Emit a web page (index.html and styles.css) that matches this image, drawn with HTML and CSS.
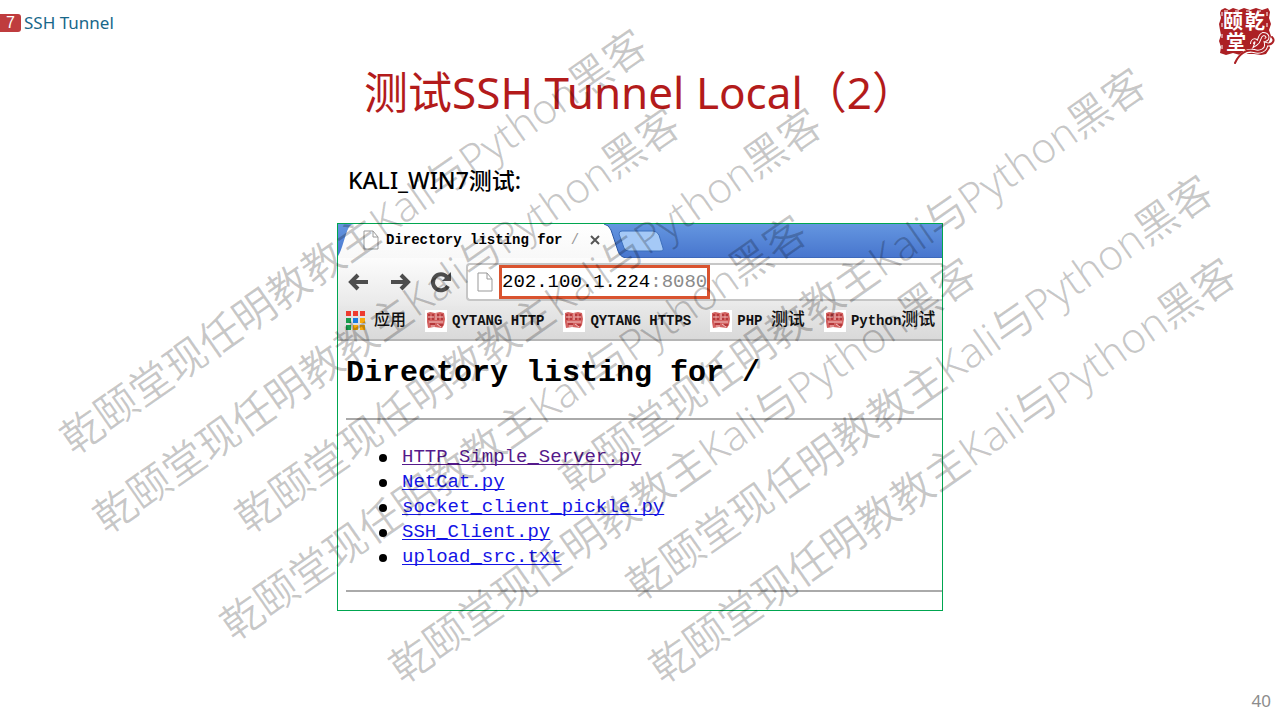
FILE: index.html
```html
<!DOCTYPE html>
<html lang="zh-CN">
<head>
<meta charset="utf-8">
<title>SSH Tunnel</title>
<link rel="stylesheet" href="styles.css">
</head>
<body>
<div class="slide">
  <header class="top">
    <div class="section"><span class="section-no">7</span><span class="section-name">SSH Tunnel</span></div>
    <svg class="logo" viewBox="0 0 62 60" role="img" aria-label="颐乾堂">
      <path class="seal" d="M5 6 9 4 13 6 17 4 23 6 28 4 34 6 40 4 46 6 52 4 54 8 53 14 55 20 53 26 55 32 53 38 54 44 50 50 45 51 38 50 30 50 24 51 17 49 10 51 4 49 5 43 3 37 5 31 4 26 3 20 5 14 4 9Z"/>
      <path class="seal-gap" d="M8 7H51V30M6 8V47"/>
      <text class="seal-text" x="7" y="25">颐</text>
      <text class="seal-text" x="29" y="25">乾</text>
      <text class="seal-text" x="10" y="46">堂</text>
      <path class="cloud-back" d="M22 56C25 50 31 46 38 47C44 49 51 46 50 40C55 42 60 37 56 33M36 40C36 35 42 35 40 40C45 37 42 32 47 30C52 30 53 35 49 36"/>
      <path class="cloud" d="M19 59C23 50 30 45 38 47C44 49 51 46 50 40C55 42 60 37 56 33M36 40C36 35 42 35 40 40C45 37 42 32 47 30C52 30 53 35 49 36"/>
    </svg>
  </header>
  <main class="content">
    <h1 class="title">测试SSH Tunnel Local（2）</h1>
    <section class="example">
      <h2 class="label">KALI_WIN7测试:</h2>
      <div class="browser">
        <div class="tabs">
          <svg class="tab-shape" viewBox="0 0 330 34" aria-hidden="true">
            <defs><linearGradient id="tab" x1="0" y1="0" x2="0" y2="1"><stop offset="0" stop-color="#fff"/><stop offset="1" stop-color="#f8f8f8"/></linearGradient></defs>
            <path d="M0 34V32C4 27 7 10 11 3Q13 0 16 0H266Q271 1 273 6L280 27Q282 33 288 34Z" fill="url(#tab)"/>
            <path d="M266 0Q271 1 273 6L280 27Q282 33 288 34" fill="none" stroke="#2c58a5"/>
            <path d="M281 10Q281 7 284 7H315Q319 7 321 11L325 24Q326 27 322 27H291Q287 27 286 24Z" fill="#a5c9f6" stroke="#3d70bd"/>
          </svg>
          <div class="tab">
            <svg class="page-icon" viewBox="0 0 18 22" aria-hidden="true"><path d="M2 2H11L16 8V20H2Z M11 2V8H16"/></svg>
            <span class="tab-title">Directory listing for <i class="fade">/</i></span>
            <button class="close" aria-label="关闭"><svg viewBox="0 0 12 12"><path d="M2 2 10 10M10 2 2 10"/></svg></button>
          </div>
        </div>
        <div class="toolbar">
          <button class="nav" aria-label="后退"><svg viewBox="0 0 24 22"><path d="M21 11H4M11 4 4 11 11 18"/></svg></button>
          <button class="nav" aria-label="前进"><svg viewBox="0 0 24 22"><path d="M3 11H20M13 4 20 11 13 18"/></svg></button>
          <button class="nav" aria-label="刷新"><svg viewBox="0 0 24 22"><path d="M19 15A8 8 0 1 1 18 6"/><path class="head" d="M22 1V10H13Z"/></svg></button>
          <div class="address">
            <svg class="page-icon" viewBox="0 0 18 22" aria-hidden="true"><path d="M2 2H11L16 8V20H2Z M11 2V8H16"/></svg>
            <div class="url">202.100.1.224<span class="port">:8080</span></div>
          </div>
        </div>
        <nav class="bookmarks">
          <a class="mark apps" href="#"><svg class="grid" viewBox="0 0 19 19" aria-hidden="true"><path fill="#ed3b2f" d="M0 0h5v5H0zM7 0h5v5H7zM14 0h5v5h-5z"/><path fill="#189c4c" d="M0 7h5v5H0zM0 14h5v5H0z"/><path fill="#1a7be0" d="M7 7h5v5H7z"/><path fill="#f7a90c" d="M14 7h5v5h-5zM7 14h5v5H7zM14 14h5v5h-5z"/></svg>应用</a>
          <a class="mark" href="#"><svg class="fav" viewBox="0 0 22 22" aria-hidden="true"><use href="#stamp"/></svg>QYTANG HTTP</a>
          <a class="mark" href="#"><svg class="fav" viewBox="0 0 22 22" aria-hidden="true"><use href="#stamp"/></svg>QYTANG HTTPS</a>
          <a class="mark" href="#"><svg class="fav" viewBox="0 0 22 22" aria-hidden="true"><use href="#stamp"/></svg><span>PHP <span class="han">测试</span></span></a>
          <a class="mark" href="#"><svg class="fav" viewBox="0 0 22 22" aria-hidden="true"><use href="#stamp"/></svg><span>Python<span class="han">测试</span></span></a>
        </nav>
        <div class="page">
          <h3 class="page-title">Directory listing for /</h3>
          <ul class="files">
            <li><a class="visited" href="#">HTTP_Simple_Server.py</a></li>
            <li><a href="#">NetCat.py</a></li>
            <li><a href="#">socket_client_pickle.py</a></li>
            <li><a href="#">SSH_Client.py</a></li>
            <li><a href="#">upload_src.txt</a></li>
          </ul>
        </div>
      </div>
    </section>
  </main>
  <footer class="foot">40</footer>
  <div class="watermarks" aria-hidden="true">
    <span class="wm wm-a">乾颐堂现任明教教主Kali与Python黑客</span>
    <span class="wm wm-b">乾颐堂现任明教教主Kali与Python黑客</span>
    <span class="wm wm-c">乾颐堂现任明教教主Kali与Python黑客</span>
    <span class="wm wm-d">乾颐堂现任明教教主Kali与Python黑客</span>
    <span class="wm wm-e">乾颐堂现任明教教主Kali与Python黑客</span>
    <span class="wm wm-f">乾颐堂现任明教教主Kali与Python黑客</span>
    <span class="wm wm-g">乾颐堂现任明教教主Kali与Python黑客</span>
    <span class="wm wm-h">乾颐堂现任明教教主Kali与Python黑客</span>
  </div>
</div>
<svg class="defs" aria-hidden="true">
  <symbol id="stamp" viewBox="0 0 22 22">
    <path fill="#fff" d="M0 0H22V22H0z"/>
    <path fill="#d2605f" d="M2 3 5 2 10 3 15 2 19 3 20 9 19 15 17 18 9 17 3 18 2 12Z"/>
    <path fill="none" stroke="#b5383b" stroke-width="2" d="M4 4V10M8 4V10M13 4V10M17 4V10M5 14H10M14 15H18"/>
    <path fill="none" stroke="#f0c0c0" d="M3 7H9M12 7H18M11 3V10M4 12H18M6 16H10M12 14 16 17"/>
  </symbol>
</svg>
</body>
</html>
```
FILE: styles.css
```css
* { box-sizing: border-box; }
body {
  margin: 0;
  background: #fff;
  font-family: "Noto Sans", "Noto Sans CJK SC", sans-serif;
}
h1, h2, h3, ul { margin: 0; padding: 0; }
button { border: 0; padding: 0; background: none; }
.defs { position: absolute; width: 0; height: 0; }
.slide {
  position: relative;
  display: flex;
  flex-direction: column;
  min-height: 100vh;
  overflow: hidden;
}
.top {
  display: flex;
  justify-content: space-between;
  align-items: flex-start;
  padding: 4px 2px 0 0;
}
.section { display: flex; align-items: center; gap: 3px; padding-top: 6px; }
.section-no {
  width: 21px;
  height: 18px;
  border-radius: 0 3px 3px 0;
  background: #bf3c3e;
  color: #fff;
  font: 16px/18px "Liberation Sans", sans-serif;
  text-align: center;
}
.section-name { color: #17678a; font-size: 17px; font-weight: 400; line-height: 26px; }
.logo { width: 62px; height: 60px; }
.seal { fill: #ac2024; }
.seal-gap { fill: none; stroke: #fff; stroke-dasharray: 4 7; }
.seal-text { fill: #fff; font: 700 20px/20px "Noto Sans CJK SC", sans-serif; }
.cloud-back { fill: none; stroke: #fff; stroke-width: 4; }
.cloud { fill: none; stroke: #ac2024; stroke-width: 2; stroke-linecap: round; }
.content { flex: 1; }
.title {
  color: #b31b1b;
  font-size: 44px;
  font-weight: 400;
  line-height: 56px;
  text-align: center;
}
.example { width: 100%; max-width: 606px; margin: 44px auto 0; }
.label { padding: 0 11px; font-size: 23px; font-weight: 500; line-height: 32px; }
.browser {
  margin-top: 27px;
  border: 1px solid #00a650;
  overflow: hidden;
  background: #fff;
  font-family: "Liberation Mono", "Noto Sans CJK SC", monospace;
}
.tabs {
  position: relative;
  height: 34px;
  background: linear-gradient(#6496e0, #4876ce);
  border-bottom: 1px solid #3d69bb;
}
.tab-shape { position: absolute; left: 0; top: 0; width: 330px; height: 34px; }
.tab { position: relative; display: flex; align-items: center; height: 32px; padding-left: 24px; }
.page-icon { width: 18px; height: 22px; fill: #fff; stroke: #999; stroke-width: 1; }
.tab-title { margin-left: 6px; font-size: 14px; font-weight: 700; }
.fade { color: #999; font-weight: 400; font-style: normal; }
.close { width: 12px; height: 12px; margin-left: 10px; }
.close svg { display: block; fill: none; stroke: #555; stroke-width: 2; }
.toolbar {
  display: flex;
  align-items: center;
  gap: 17px;
  height: 48px;
  padding-left: 9px;
  background: linear-gradient(#fcfcfc, #e9e9e9);
}
.nav { width: 24px; height: 22px; }
.nav svg { display: block; fill: none; stroke: #4d4d4d; stroke-width: 4; }
.nav .head { fill: #4d4d4d; stroke: none; }
.address {
  display: flex;
  flex: 1;
  align-items: center;
  gap: 5px;
  height: 38px;
  padding-left: 8px;
  margin-left: -4px;
  border: 2px solid #c6c6c6;
  border-right: 0;
  border-radius: 4px 0 0 4px;
  background: #fff;
}
.url {
  height: 34px;
  border: 3px solid #d9532f;
  font-size: 19px;
  line-height: 28px;
}
.port { color: #8a8a8a; }
.bookmarks {
  display: flex;
  align-items: center;
  gap: 19px;
  height: 35px;
  padding: 0 7px 4px 8px;
  border-bottom: 2px solid #b5b5b5;
  background: linear-gradient(#e8e8e8, #d9d9d9);
}
.mark {
  display: flex;
  align-items: center;
  gap: 5px;
  color: #111;
  font-size: 14px;
  font-weight: 700;
  line-height: 22px;
  text-decoration: none;
  white-space: pre;
}
.apps { gap: 9px; font-size: 16px; font-weight: 500; }
.han { font-size: 17px; font-weight: 500; }
.grid { width: 19px; height: 19px; }
.fav { width: 22px; height: 22px; }
.page { padding: 14px 0 18px 8px; }
.page-title { font-size: 30px; line-height: 36px; }
.files {
  margin-top: 27px;
  padding: 25px 0 20px 33px;
  border: solid #aaa;
  border-width: 2px 0;
  font-size: 19px;
  line-height: 25px;
  list-style: none;
}
.files li { display: flex; align-items: center; gap: 15px; }
.files li::before { content: ""; width: 8px; height: 8px; border-radius: 50%; background: #000; }
.files a { color: #1414e6; text-underline-offset: 2px; text-decoration-skip-ink: none; }
.files .visited { color: #551a8b; }
.foot {
  padding: 0 9px 7px;
  color: #8c8c8c;
  font-size: 17px;
  font-weight: 400;
  line-height: 24px;
  text-align: right;
}
.watermarks { position: absolute; inset: 0; overflow: hidden; pointer-events: none; }
.wm {
  position: absolute;
  color: rgba(0, 0, 0, 0.22);
  font-size: 42px;
  font-weight: 350;
  line-height: 54px;
  white-space: nowrap;
  transform: translate(-50%, -50%) rotate(-35deg);
}
.wm-a { left: 353px; top: 241px; }
.wm-b { left: 386px; top: 320px; }
.wm-c { left: 528px; top: 320px; }
.wm-d { left: 513px; top: 427px; }
.wm-e { left: 682px; top: 470px; }
.wm-f { left: 942px; top: 470px; }
.wm-g { left: 919px; top: 387px; }
.wm-h { left: 852px; top: 280px; }
```
